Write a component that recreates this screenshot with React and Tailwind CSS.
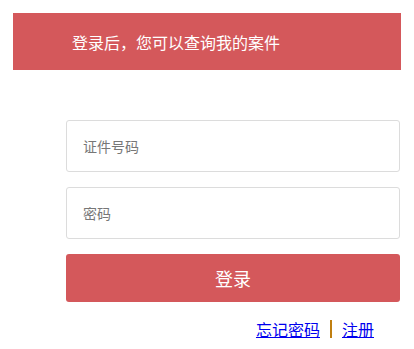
export default function App() {
  const font = { fontFamily: '"Noto Sans CJK SC", "Noto Sans", sans-serif' };
  return (
    <div className="w-[414px] h-[349px] bg-white pt-[13px] px-[13px]" style={font}>
      <div className="h-[57px] bg-[#d4585b] flex items-center pl-[59px] text-white text-[16px]">
        登录后，您可以查询我的案件
      </div>
      <div className="pl-[53px] pr-[1px] pt-[50px] flex flex-col">
        <div className="h-[52px] border border-[#dcdcdc] rounded-[3px] flex items-center pl-[16px] text-[14px] text-[#777]">
          证件号码
        </div>
        <div className="mt-[15px] h-[52px] border border-[#dcdcdc] rounded-[3px] flex items-center pl-[16px] text-[14px] text-[#777]">
          密码
        </div>
        <div className="mt-[15px] h-[48px] bg-[#d4585b] rounded-[3px] flex items-center justify-center text-white text-[18px]">
          登录
        </div>
        <div className="mt-[17px] flex justify-end items-center pr-[26px] text-[16px] leading-[20px]">
          <a href="#" className="text-[#0000ee] underline">忘记密码</a>
          <span className="mx-[10px] w-[2px] h-[18px] bg-[#c07f10]"></span>
          <a href="#" className="text-[#0000ee] underline">注册</a>
        </div>
      </div>
    </div>
  );
}
